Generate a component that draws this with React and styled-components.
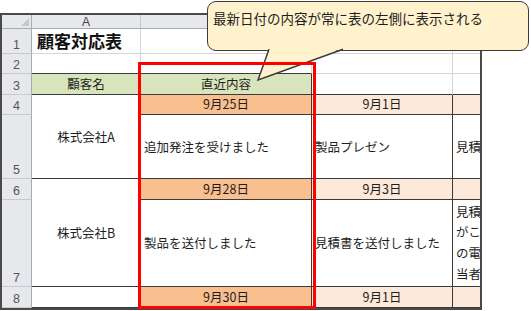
import React from "react";
import styled, { createGlobalStyle } from "styled-components";

const GlobalStyle = createGlobalStyle`
  html, body {
    margin: 0;
    padding: 0;
    background: #ffffff;
  }
`

const LIGHT = "#D6D6D6";
const DARK = "#3A3A3A";
const HEAD_BG = "#E6E8EB";

const Page = styled.div`
  position: relative;
  width: 531px;
  height: 311px;
  overflow: hidden;
  padding-top: 13px;
  box-sizing: border-box;
  font-family: "Noto Sans CJK JP", "Noto Sans", sans-serif;
`

const Frame = styled.div`
  width: 482px;
  height: 297px;
  box-sizing: border-box;
  border: 2px solid #4a4a4a;
  overflow: hidden;
  background: #fff;
`

const Sheet = styled.div`
  display: grid;
  grid-template-columns: 30px 109px 171px 141px 140px;
  grid-template-rows: 14px 25px 20px 21px 20px 64px 21px 87px 21px;
`

const Corner = styled.div`
  display: flex;
  justify-content: flex-end;
  align-items: flex-end;
  padding: 0 2px 2px 0;
  box-sizing: border-box;
  background: ${HEAD_BG};
  border-right: 1px solid #A8ABAF;
  border-bottom: 1px solid #A8ABAF;
`

const CornerMark = styled.div`
  width: 0;
  height: 0;
  border-left: 8px solid transparent;
  border-bottom: 8px solid #C4C7CB;
`

const ColHead = styled.div`
  display: flex;
  align-items: center;
  justify-content: center;
  box-sizing: border-box;
  background: ${HEAD_BG};
  border-right: 1px solid #C6C9CD;
  border-bottom: 1px solid #A8ABAF;
  font-family: "Liberation Sans", Arial, sans-serif;
  font-size: 12px;
  color: #444;
`

const RowHead = styled.div`
  display: flex;
  align-items: flex-end;
  justify-content: center;
  box-sizing: border-box;
  background: ${HEAD_BG};
  border-right: 1px solid #A8ABAF;
  border-bottom: 1px solid #C6C9CD;
  font-family: "Liberation Sans", Arial, sans-serif;
  font-size: 12.5px;
  line-height: 15px;
  color: #555;
`

const Cell = styled.div`
  display: flex;
  box-sizing: border-box;
  min-width: 0;
  overflow: hidden;
  white-space: nowrap;
  grid-row: ${p => (p.$span ? `span ${p.$span}` : "auto")};
  align-items: ${p => (p.$middle ? "center" : "flex-end")};
  justify-content: ${p => (p.$center ? "center" : "flex-start")};
  padding: ${p => (p.$middle ? "0 3px" : "0 3px 1px")};
  background: ${p => p.$bg || "#fff"};
  border-right: 1px solid ${p => p.$r || LIGHT};
  border-bottom: 1px solid ${p => p.$b || LIGHT};
  font-size: 12.5px;
  line-height: 18px;
  color: #1e1e1e;
`

const Title = styled.span`
  font-size: 17px;
  font-weight: 700;
  line-height: 22px;
  color: #111;
  padding-left: 2px;
`

const Lines = styled.div`
  line-height: 20.7px;
`

const Callout = styled.div`
  position: absolute;
  left: 207px;
  top: 1px;
  width: 322px;
  height: 82px;
`

const Bubble = styled.div`
  position: relative;
  z-index: 1;
  height: 50px;
  box-sizing: border-box;
  border: 1.5px solid #3c3c3c;
  border-radius: 9px;
  background: #FFF2CC;
  padding: 6px 0 0 5px;
  font-size: 13.5px;
  line-height: 20px;
  color: #1e1e1e;
`

const Tail = styled.svg`
  position: absolute;
  left: 0;
  top: 0;
  z-index: 2;
  overflow: visible;
`

const Highlight = styled.div`
  position: absolute;
  left: 138px;
  top: 62px;
  width: 178px;
  height: 247px;
  box-sizing: border-box;
  border: 3px solid #FF0000;
  z-index: 3;
`

const SALMON = "#FABF8F";
const PEACH = "#FDE9D9";
const GREEN = "#D8E4BC";

export default function App() {
  return (
    <>
      <GlobalStyle />
      <Page>
        <Frame>
          <Sheet>
            <Corner><CornerMark /></Corner>
            <ColHead>A</ColHead>
            <ColHead />
            <ColHead />
            <ColHead />

            <RowHead>1</RowHead>
            <Cell><Title>顧客対応表</Title></Cell>
            <Cell />
            <Cell />
            <Cell />

            <RowHead>2</RowHead>
            <Cell $b={DARK} />
            <Cell $b={DARK} />
            <Cell />
            <Cell />

            <RowHead>3</RowHead>
            <Cell $bg={GREEN} $r={DARK} $b={DARK} $center>顧客名</Cell>
            <Cell $bg={GREEN} $r={DARK} $b={DARK} $center>直近内容</Cell>
            <Cell $b={DARK} />
            <Cell $b={DARK} />

            <RowHead>4</RowHead>
            <Cell $span={2} $r={DARK} $b={DARK} $center $middle>株式会社A</Cell>
            <Cell $bg={SALMON} $r={DARK} $b={DARK} $center>9月25日</Cell>
            <Cell $bg={PEACH} $r={DARK} $b={DARK} $center>9月1日</Cell>
            <Cell $bg={PEACH} $r={DARK} $b={DARK} />

            <RowHead>5</RowHead>
            <Cell $r={DARK} $b={DARK} $middle>追加発注を受けました</Cell>
            <Cell $r={DARK} $b={DARK} $middle>製品プレゼン</Cell>
            <Cell $r={DARK} $b={DARK} $middle>見積</Cell>

            <RowHead>6</RowHead>
            <Cell $span={2} $r={DARK} $b={DARK} $center $middle>株式会社B</Cell>
            <Cell $bg={SALMON} $r={DARK} $b={DARK} $center>9月28日</Cell>
            <Cell $bg={PEACH} $r={DARK} $b={DARK} $center>9月3日</Cell>
            <Cell $bg={PEACH} $r={DARK} $b={DARK} />

            <RowHead>7</RowHead>
            <Cell $r={DARK} $b={DARK} $middle>製品を送付しました</Cell>
            <Cell $r={DARK} $b={DARK} $middle>見積書を送付しました</Cell>
            <Cell $r={DARK} $b={DARK} $middle>
              <Lines>
                見積<br />
                がこ<br />
                の電<br />
                当者
              </Lines>
            </Cell>

            <RowHead>8</RowHead>
            <Cell $r={DARK} $b={DARK} />
            <Cell $bg={SALMON} $r={DARK} $b={DARK} $center>9月30日</Cell>
            <Cell $bg={PEACH} $r={DARK} $b={DARK} $center>9月1日</Cell>
            <Cell $bg={PEACH} $r={DARK} $b={DARK} />
          </Sheet>
        </Frame>

        <Highlight />

        <Callout>
          <Bubble>最新日付の内容が常に表の左側に表示される</Bubble>
          <Tail width="322" height="82" viewBox="0 0 322 82">
            <polygon points="62,47 136,47 51,79" fill="#FFF2CC" />
            <polyline
              points="62,48.3 51,79 136,48.3"
              fill="none"
              stroke="#3c3c3c"
              strokeWidth="1.5"
              strokeLinejoin="miter"
            />
          </Tail>
        </Callout>
      </Page>
    </>
  );
}
